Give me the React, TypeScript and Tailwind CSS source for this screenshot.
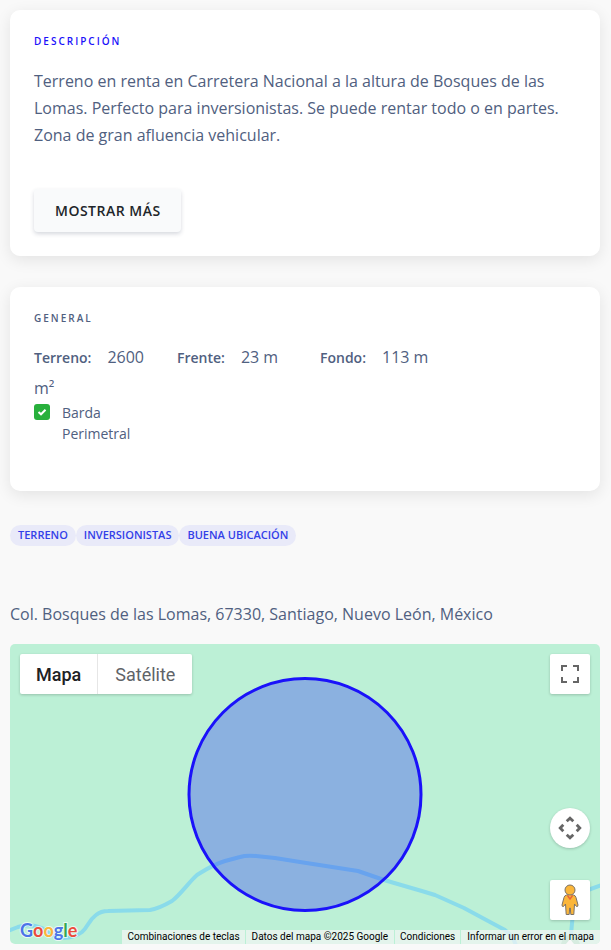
import type { ReactNode } from "react";

type CardProps = {
  title: string;
  titleClassName: string;
  children: ReactNode;
};

const measures = [
  { label: "Terreno:", value: "2600 m²" },
  { label: "Frente:", value: "23 m" },
  { label: "Fondo:", value: "113 m" },
];

const tags = ["TERRENO", "INVERSIONISTAS", "BUENA UBICACIÓN"];

const logoLetters = [
  { letter: "G", className: "text-[#4c74e8]" },
  { letter: "o", className: "text-[#ea4b3c]" },
  { letter: "o", className: "text-[#fbb63c]" },
  { letter: "g", className: "text-[#4c74e8]" },
  { letter: "l", className: "text-[#34a853]" },
  { letter: "e", className: "text-[#ea4b3c]" },
];

function Card({ title, titleClassName, children }: CardProps) {
  return (
    <section className="rounded-[10px] bg-white p-6 shadow-[0_4px_16px_rgba(0,0,0,0.09)]">
      <h2
        className={`text-[10px] leading-[14px] font-semibold tracking-[2px] uppercase ${titleClassName}`}
      >
        {title}
      </h2>
      {children}
    </section>
  );
}

function MapCanvas() {
  return (
    <svg
      className="absolute inset-0 h-full w-full"
      viewBox="0 0 590 300"
      preserveAspectRatio="xMidYMid slice"
      fill="none"
      aria-hidden="true"
    >
      <g stroke="#8adbea" strokeWidth="4" strokeLinejoin="round">
        <path d="M-2 287L8 283Q20 279 32 284Q44 294 54 294Q64 294 72 288C78 283 78 277 86 271Q91 267 98 267L140 266Q148 265 162 257C170 251 180 237 187 231C195 226 202 221 215 217L230 213Q236 211 246 212L265 214L290 218L348 227L374 236L398 243Q412 247 425 251L454 264L480 278L495 286Q504 293 506 302" />
        <path d="M592 241L578 246Q566 252 563 268L560 302" />
      </g>
      <path d="M551 300Q553 291 560 291Q567 291 570 300Z" fill="#8fd5b0" />
      <path d="M556 300L560 295L564 300Z" fill="#ffffff" />
      <circle
        cx="295"
        cy="150.5"
        r="116"
        fill="#1c20fa"
        fillOpacity="0.3"
        stroke="#1a12fa"
        strokeWidth="3"
      />
    </svg>
  );
}

function Pegman() {
  return (
    <svg width="18" height="32" viewBox="0 0 18 32" aria-hidden="true">
      <path
        d="M5.5 11H12.5Q14.5 11.5 15 13.5L17 21Q17 23 15.5 22.5L13.5 20L12.8 30.5H9.8L9.3 24H8.7L8.2 30.5H5.2L4.5 20L2.5 22.5Q1 23 1 21L3 13.5Q3.5 11.5 5.5 11Z"
        fill="#fbb63a"
        stroke="#7b7267"
      />
      <circle cx="9" cy="6" r="5" fill="#fbb63a" stroke="#7b7267" />
      <path
        d="M6.5 11.5L9 15L11.5 11.5"
        fill="#fbb63a"
        stroke="#e8643a"
        strokeWidth="1.5"
      />
    </svg>
  );
}

function LocationMap() {
  return (
    <div className="relative flex h-[300px] flex-col justify-between overflow-hidden rounded-[5px] bg-[#bcf0d6] font-[Roboto,sans-serif]">
      <MapCanvas />
      <div className="relative flex items-start justify-between p-[10px]">
        <div className="flex rounded-xs bg-white text-lg shadow-[0_1px_3px_rgba(0,0,0,0.2)]">
          <button className="h-10 border-r border-[#e6e6e6] px-4 pt-px font-medium text-[#202124]">
            Mapa
          </button>
          <button className="h-10 px-[17px] pt-px text-[#5f6368]">
            Satélite
          </button>
        </div>
        <button
          aria-label="Activar vista de pantalla completa"
          className="flex h-10 w-10 items-center justify-center rounded-xs bg-white shadow-[0_1px_3px_rgba(0,0,0,0.2)]"
        >
          <svg width="18" height="18" viewBox="0 0 18 18" fill="#666666">
            <path d="M0 0v6h2V2h4V0H0zm18 0h-6v2h4v4h2V0zm-2 16h-4v2h6v-6h-2v4zM2 12H0v6h6v-2H2v-4z" />
          </svg>
        </button>
      </div>
      <div className="relative">
        <div className="mb-[10px] flex flex-col items-end gap-8 pr-[10px]">
          <button
            aria-label="Controles de visualización del mapa"
            className="flex h-10 w-10 items-center justify-center rounded-full bg-white shadow-[0_1px_3px_rgba(0,0,0,0.2)]"
          >
            <svg
              width="24"
              height="24"
              viewBox="0 0 24 24"
              fill="none"
              stroke="#666666"
              strokeWidth="2.8"
            >
              <path d="M8.7 5.3L12 2.2L15.3 5.3M8.7 18.7L12 21.8L15.3 18.7M5.3 8.7L2.2 12L5.3 15.3M18.7 8.7L21.8 12L18.7 15.3" />
            </svg>
          </button>
          <button
            aria-label="Arrastra al hombrecito naranja al mapa"
            className="flex h-10 w-10 items-center justify-center rounded-xs bg-white shadow-[0_1px_3px_rgba(0,0,0,0.2)]"
          >
            <Pegman />
          </button>
        </div>
        <div className="flex h-[14px] items-end justify-between">
          <a
            href="#mapa"
            aria-label="Google"
            className="ml-[10px] flex font-[Lato,sans-serif] text-[18px] leading-[28px] font-bold [paint-order:stroke] [-webkit-text-stroke:2px_#ffffffb0]"
          >
            {logoLetters.map(({ letter, className }, index) => (
              <span key={index} className={className}>
                {letter}
              </span>
            ))}
          </a>
          <div className="flex gap-px text-[10px] leading-[14px] whitespace-nowrap text-black">
            <button className="bg-[#f5f5f5]/70 px-[5px]">
              Combinaciones de teclas
            </button>
            <span className="bg-[#f5f5f5]/70 px-[6px]">
              Datos del mapa ©2025 Google
            </span>
            <a href="#condiciones" className="bg-[#f5f5f5]/70 px-[5px]">
              Condiciones
            </a>
            <a href="#informar" className="bg-[#f5f5f5]/70 px-[6px]">
              Informar un error en el mapa
            </a>
          </div>
        </div>
      </div>
    </div>
  );
}

export default function App() {
  return (
    <main className="min-h-screen bg-[#f9f9f9] pt-[10px] pr-[11px] pb-[6px] pl-[10px] font-['Open_Sans',sans-serif] text-base text-[#506080]">
      <Card title="Descripción" titleClassName="text-[#1a12fa]">
        <p className="mt-5 leading-[27px]">
          Terreno en renta en Carretera Nacional a la altura de Bosques de las
          Lomas. Perfecto para inversionistas. Se puede rentar todo o en partes.
          Zona de gran afluencia vehicular.
        </p>
        <button className="mt-10 block h-[43px] rounded-sm bg-[#f9fafb] pr-5 pl-[21px] text-sm font-semibold tracking-[0.5px] text-[#212529] shadow-[0_2px_4px_rgba(50,60,90,0.2)]">
          MOSTRAR MÁS
        </button>
      </Card>

      <div className="mt-[31px]">
        <Card title="General" titleClassName="text-[#506080]">
          <div className="-mx-[15px] mt-[17px] grid grid-cols-4">
            {measures.map(({ label, value }) => (
              <p key={label} className="px-[15px] leading-[31px]">
                <span className="mr-4 text-sm font-semibold">{label}</span>
                {value}
              </p>
            ))}
          </div>
          <div className="-mx-[15px] -mt-0.5 grid grid-cols-4">
            <label className="flex gap-3 px-[15px] pb-[23px] text-sm leading-[21px]">
              <span className="relative mt-0.5 h-4 w-4 shrink-0">
                <input
                  type="checkbox"
                  checked
                  readOnly
                  className="block h-4 w-4 appearance-none rounded-[3px] bg-[#28b03c]"
                />
                <svg
                  className="pointer-events-none absolute inset-0"
                  viewBox="0 0 16 16"
                  fill="none"
                  stroke="#ffffff"
                  strokeWidth="2"
                >
                  <path d="M4.5 8L7 10.3L11.5 5.8" />
                </svg>
              </span>
              Barda Perimetral
            </label>
          </div>
        </Card>
      </div>

      <ul className="mt-[34px] flex text-[11px] leading-5 font-semibold text-[#3340e8]">
        {tags.map((tag) => (
          <li key={tag} className="rounded-full bg-[#e9eaf9] px-2 pb-px">
            {tag}
          </li>
        ))}
      </ul>

      <p className="mt-[55px] mb-4 leading-[27px]">
        Col. Bosques de las Lomas, 67330, Santiago, Nuevo León, México
      </p>
      <LocationMap />
    </main>
  );
}
